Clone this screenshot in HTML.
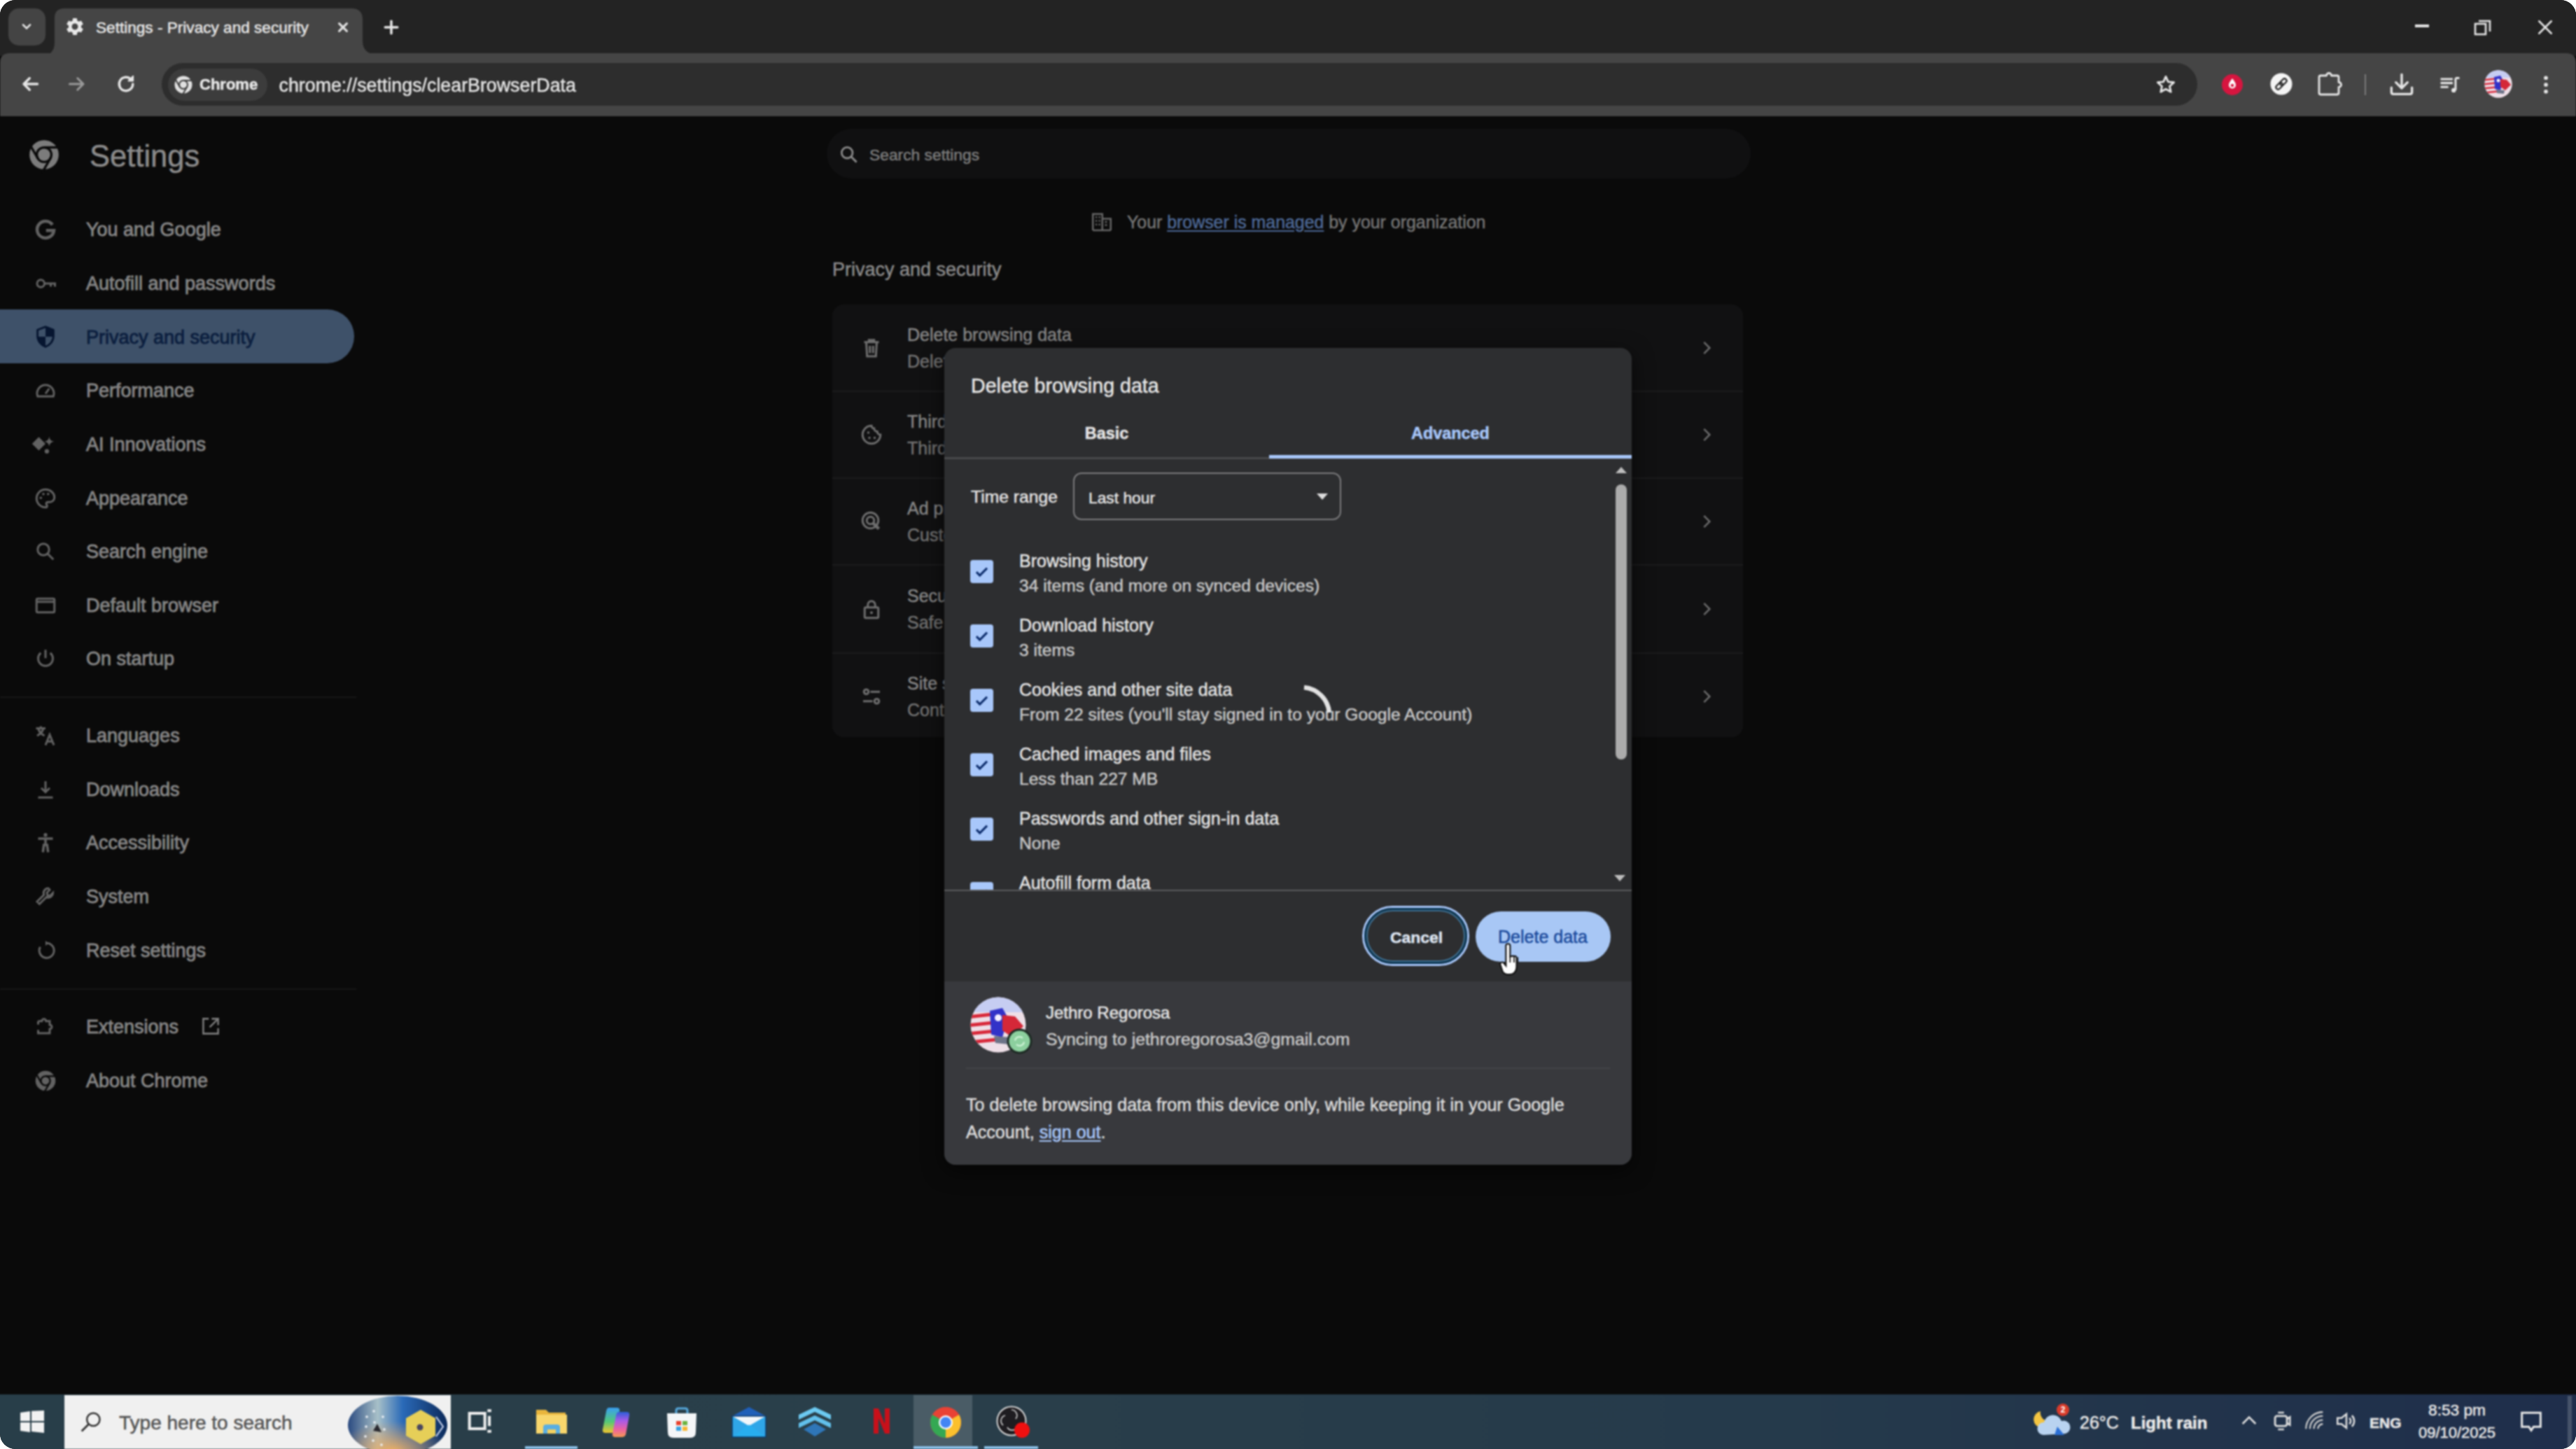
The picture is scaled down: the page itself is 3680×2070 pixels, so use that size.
<!DOCTYPE html>
<html><head><meta charset="utf-8">
<style>
*{margin:0;padding:0;box-sizing:border-box}
html,body{width:3680px;height:2070px;overflow:hidden;background:#fff;font-family:"Liberation Sans",sans-serif}
#inner{position:absolute;left:0;top:0;width:3680px;height:2070px;filter:blur(0.8px)}
#frame{position:absolute;left:0;top:0;width:3680px;height:2070px;border-radius:22px;overflow:hidden;background:#0a0a0a}
.a{position:absolute}
svg{overflow:visible}
.t{position:absolute;white-space:nowrap;line-height:1;-webkit-text-stroke:0.5px currentColor}
</style></head>
<body><div id="frame"><div id="inner">
<div class="a" style="left:-12px;top:-12px;width:3704px;height:92px;background:#232323;"></div>
<div class="a" style="left:12px;top:12px;width:53px;height:53px;background:#444444;border-radius:15px;"></div>
<svg class="a" style="left:26.0px;top:26.0px;" width="24" height="24" viewBox="0 0 24 24"><path d="M7 9.5l5 5 5-5" fill="none" stroke="#e6e6e6" stroke-width="2.6" stroke-linecap="round"/></svg>
<svg class="a" style="left:58px;top:10px;" width="490" height="70" viewBox="0 0 490 70"><path d="M0 70 Q20 70 20 50 L20 16 Q20 2 34 2 L444 2 Q460 2 460 18 L460 48 Q460 68 482 68 L482 70 Z" fill="#454545"/></svg>
<svg class="a" style="left:92.0px;top:23.0px;" width="30" height="30" viewBox="0 0 24 24"><path fill="#e8e8e8" d="M19.14 12.94c.04-.3.06-.61.06-.94 0-.32-.02-.64-.07-.94l2.03-1.58a.49.49 0 00.12-.61l-1.92-3.32a.488.488 0 00-.59-.22l-2.39.96c-.5-.38-1.03-.7-1.62-.94l-.36-2.54a.484.484 0 00-.48-.41h-3.84c-.24 0-.43.17-.47.41l-.36 2.54c-.59.24-1.13.57-1.62.94l-2.39-.96c-.22-.08-.47 0-.59.22L2.74 8.87c-.12.21-.08.47.12.61l2.03 1.58c-.05.3-.09.63-.09.94s.02.64.07.94l-2.03 1.58a.49.49 0 00-.12.61l1.92 3.32c.12.22.37.29.59.22l2.39-.96c.5.38 1.03.7 1.62.94l.36 2.54c.05.24.24.41.48.41h3.84c.24 0 .44-.17.47-.41l.36-2.54c.59-.24 1.13-.56 1.62-.94l2.39.96c.22.08.47 0 .59-.22l1.92-3.32c.12-.22.07-.47-.12-.61l-2.01-1.58zM12 15.6c-1.98 0-3.6-1.62-3.6-3.6s1.62-3.6 3.6-3.6 3.6 1.62 3.6 3.6-1.62 3.6-3.6 3.6z"/></svg>
<div class="t" style="left:137px;top:28.87px;font-size:22.6px;color:#e6e6e6;font-weight:400;">Settings - Privacy and security</div>
<svg class="a" style="left:477.0px;top:26.0px;" width="26" height="26" viewBox="0 0 24 24"><path d="M7 7l10 10M17 7L7 17" stroke="#e0e0e0" stroke-width="2.9" stroke-linecap="round"/></svg>
<svg class="a" style="left:544.0px;top:24.0px;" width="30" height="30" viewBox="0 0 24 24"><path d="M12 5v14M5 12h14" stroke="#e6e6e6" stroke-width="2.8" stroke-linecap="round"/></svg>
<div class="a" style="left:3450px;top:35px;width:20px;height:4px;background:#e6e6e6;"></div>
<svg class="a" style="left:3534px;top:27px;" width="28" height="24" viewBox="0 0 28 24"><rect x="2" y="7" width="15" height="15" fill="none" stroke="#e6e6e6" stroke-width="2.6"/><path d="M7 3h16v15" fill="none" stroke="#e6e6e6" stroke-width="2.6"/></svg>
<svg class="a" style="left:3621.0px;top:24.0px;" width="30" height="30" viewBox="0 0 24 24"><path d="M5 5l14 14M19 5L5 19" stroke="#e6e6e6" stroke-width="2" stroke-linecap="round"/></svg>
<svg class="a" style="left:0px;top:76px;" width="3680" height="90" viewBox="0 0 3680 90"><path d="M0 14 Q0 0 14 0 L3666 0 Q3680 0 3680 14 L3680 90 L0 90 Z" fill="#454545"/></svg>
<svg class="a" style="left:25.0px;top:102.0px;" width="36" height="36" viewBox="0 0 24 24"><path d="M19 12H6M11.5 6.5L6 12l5.5 5.5" fill="none" stroke="#e6e6e6" stroke-width="2.3" stroke-linecap="round" stroke-linejoin="round"/></svg>
<svg class="a" style="left:92.0px;top:102.0px;" width="36" height="36" viewBox="0 0 24 24"><path d="M5 12h13M12.5 6.5L18 12l-5.5 5.5" fill="none" stroke="#9a9a9a" stroke-width="2" stroke-linecap="round" stroke-linejoin="round"/></svg>
<svg class="a" style="left:162.0px;top:102.0px;" width="36" height="36" viewBox="0 0 24 24"><path d="M18.5 12a6.5 6.5 0 1 1-2-4.7" fill="none" stroke="#e6e6e6" stroke-width="2.3" stroke-linecap="round"/><path d="M18.8 4.5v4.5h-4.5z" fill="#e6e6e6" stroke="#e6e6e6" stroke-width="1.2" stroke-linejoin="round"/></svg>
<div class="a" style="left:231px;top:90px;width:2908px;height:61px;background:#2d2d2d;border-radius:31px;"></div>
<div class="a" style="left:240px;top:98px;width:142px;height:46px;background:#3c3c3c;border-radius:23px;"></div>
<svg class="a" style="left:247.0px;top:106.0px;" width="30" height="30" viewBox="0 0 24 24"><circle cx="12" cy="12" r="10" fill="#e0e0e0"/><circle cx="12" cy="12" r="5.6" fill="#3c3c3c"/><circle cx="12" cy="12" r="4" fill="#e0e0e0"/><path d="M12.00 7.20L24.00 7.20" stroke="#3c3c3c" stroke-width="1.6"/><path d="M16.16 14.40L10.16 24.79" stroke="#3c3c3c" stroke-width="1.6"/><path d="M7.84 14.40L1.84 4.01" stroke="#3c3c3c" stroke-width="1.6"/></svg>
<div class="t" style="left:285px;top:110.38px;font-size:22px;color:#e8e8e8;font-weight:700;">Chrome</div>
<div class="t" style="left:398.5px;top:109.31px;font-size:26.8px;color:#e3e3e3;font-weight:400;">chrome://settings/clearBrowserData</div>
<svg class="a" style="left:3077.0px;top:104.0px;" width="34" height="34" viewBox="0 0 24 24"><path d="M12 3.8l2.4 5.3 5.8.6-4.3 3.9 1.2 5.7L12 16.4l-5.1 2.9 1.2-5.7-4.3-3.9 5.8-.6z" fill="none" stroke="#e6e6e6" stroke-width="2" stroke-linejoin="round"/></svg>
<svg class="a" style="left:3173px;top:105px;" width="32" height="32" viewBox="0 0 32 32"><circle cx="16" cy="16" r="15" fill="#d6153f"/><path d="M16 7c3 4 5 6.5 5 9.5a5 5 0 0 1-10 0C11 13.5 13 11 16 7z" fill="#fff"/><circle cx="16" cy="17" r="2.2" fill="#d6153f"/></svg>
<svg class="a" style="left:3243px;top:104px;" width="32" height="32" viewBox="0 0 32 32"><circle cx="16" cy="16" r="15.5" fill="#f4f4f4"/><g transform="rotate(-45 16 16)"><rect x="6.5" y="13" width="11" height="6" rx="3" fill="none" stroke="#262626" stroke-width="2.2"/><rect x="14.5" y="13" width="11" height="6" rx="3" fill="none" stroke="#262626" stroke-width="2.2"/></g></svg>
<svg class="a" style="left:3308.0px;top:101.0px;" width="40" height="40" viewBox="0 0 24 24"><path d="M3 5.5Q3 4.2 4.3 4.2H9.3A2.1 2.1 0 0 1 13.5 4.2H18.5Q19.8 4.2 19.8 5.5V9.9A2.1 2.1 0 0 1 19.8 14.1V19.1Q19.8 20.4 18.5 20.4H4.3Q3 20.4 3 19.1Z" fill="none" stroke="#e6e6e6" stroke-width="1.7" stroke-linejoin="round"/></svg>
<div class="a" style="left:3378px;top:106px;width:2px;height:30px;background:#7a7a7a;"></div>
<svg class="a" style="left:3411.0px;top:101.0px;" width="40" height="40" viewBox="0 0 24 24"><path d="M12 3.2v11.5M7 10l5 5 5-5" fill="none" stroke="#e6e6e6" stroke-width="2" stroke-linecap="round" stroke-linejoin="round"/><path d="M3.2 14.5V18.5Q3.2 20 4.7 20H19.3Q20.8 20 20.8 18.5V14.5" fill="none" stroke="#e6e6e6" stroke-width="2" stroke-linecap="round"/></svg>
<svg class="a" style="left:3481.0px;top:102.0px;" width="38" height="38" viewBox="0 0 24 24"><path d="M3.5 7h11M3.5 10.5h11M3.5 14h7" stroke="#e6e6e6" stroke-width="1.9"/><path d="M17 6v11" stroke="#e6e6e6" stroke-width="1.9"/><path d="M17 6h3.5" stroke="#e6e6e6" stroke-width="1.9"/><circle cx="15.3" cy="17" r="2" fill="#e6e6e6"/></svg>
<svg class="a" style="left:3549px;top:100px;" width="40" height="40" viewBox="0 0 40 40"><g transform="scale(0.5)"><defs><clipPath id="av1"><circle cx="40" cy="40" r="39.5"/></clipPath></defs><g clip-path="url(#av1)"><rect width="80" height="80" fill="#eedfe7"/><rect width="80" height="22" fill="#c6cdf2"/><path d="M0 26L36 22V27L0 31zM0 38L38 34V39L0 43zM0 50L40 46V51L0 55zM4 62L44 58V63L4 67z" fill="#d8283a"/><path d="M28 20L46 16L54 30L46 58L30 54Z" fill="#3232c8"/><circle cx="40" cy="30" r="5" fill="#f4f0ff"/><path d="M46 26L64 28L76 42L60 58L46 48Z" fill="#d42838"/><path d="M34 56L58 58L56 68L36 66Z" fill="#6d7488"/></g></g></svg>
<svg class="a" style="left:3619.0px;top:103.0px;" width="36" height="36" viewBox="0 0 24 24"><circle cx="12" cy="5.5" r="1.9" fill="#e6e6e6"/><circle cx="12" cy="12" r="1.9" fill="#e6e6e6"/><circle cx="12" cy="18.5" r="1.9" fill="#e6e6e6"/></svg>
<div class="a" style="left:-12px;top:166px;width:3704px;height:1826px;background:#0a0a0a;"></div>
<svg class="a" style="left:38.0px;top:196.0px;" width="50" height="50" viewBox="0 0 24 24"><circle cx="12" cy="12" r="10" fill="#7c7c7c"/><circle cx="12" cy="12" r="5.800000000000001" fill="#0a0a0a"/><circle cx="12" cy="12" r="4.2" fill="#7c7c7c"/><path d="M12.00 7.00L24.00 7.00" stroke="#0a0a0a" stroke-width="1.6"/><path d="M16.33 14.50L10.33 24.89" stroke="#0a0a0a" stroke-width="1.6"/><path d="M7.67 14.50L1.67 4.11" stroke="#0a0a0a" stroke-width="1.6"/></svg>
<div class="t" style="left:128px;top:202.18px;font-size:43.5px;color:#8a8a8a;font-weight:400;">Settings</div>
<div class="a" style="left:-12px;top:442px;width:518px;height:77px;background:#3e5169;border-radius:0 38.5px 38.5px 0;"></div>
<div class="a" style="left:0px;top:995px;width:509px;height:2px;background:#161616;"></div>
<div class="a" style="left:0px;top:1412px;width:509px;height:2px;background:#161616;"></div>
<div class="t" style="left:123px;top:315.14px;font-size:27px;color:#838383;font-weight:400;-webkit-text-stroke:0.9px currentColor">You and Google</div>
<svg class="a" style="left:47.0px;top:310.0px;" width="36" height="36" viewBox="0 0 24 24"><path d="M18.6 7.4A8 8 0 1 0 20 12.8H12.5" fill="none" stroke="#626262" stroke-width="3"/></svg>
<div class="t" style="left:123px;top:391.84px;font-size:27px;color:#838383;font-weight:400;-webkit-text-stroke:0.9px currentColor">Autofill and passwords</div>
<svg class="a" style="left:47.0px;top:386.7px;" width="36" height="36" viewBox="0 0 24 24"><circle cx="7.5" cy="12" r="3.5" fill="none" stroke="#626262" stroke-width="2"/><path d="M11 12h10v3M17 12v3" fill="none" stroke="#626262" stroke-width="2"/></svg>
<div class="t" style="left:123px;top:468.54px;font-size:27px;color:#0c1f3f;font-weight:400;-webkit-text-stroke:0.9px currentColor">Privacy and security</div>
<svg class="a" style="left:47.0px;top:463.4px;" width="36" height="36" viewBox="0 0 24 24"><path d="M12 2.6L19.6 5.5V11.2C19.6 16 16.4 20 12 21.6 7.6 20 4.4 16 4.4 11.2V5.5z" fill="none" stroke="#061530" stroke-width="1.9" stroke-linejoin="round"/><path d="M12 2.6L19.6 5.5V12H12z" fill="#061530"/><path d="M4.4 12H12V21.6C7.6 20 4.4 16 4.4 12z" fill="#061530"/></svg>
<div class="t" style="left:123px;top:545.14px;font-size:27px;color:#838383;font-weight:400;-webkit-text-stroke:0.9px currentColor">Performance</div>
<svg class="a" style="left:47.0px;top:540.0px;" width="36" height="36" viewBox="0 0 24 24"><path d="M4.5 17.5a8 8 0 1 1 15 0z" fill="none" stroke="#626262" stroke-width="2"/><path d="M12 15l3.5-5" fill="none" stroke="#626262" stroke-width="2"/></svg>
<div class="t" style="left:123px;top:621.94px;font-size:27px;color:#838383;font-weight:400;-webkit-text-stroke:0.9px currentColor">AI Innovations</div>
<svg class="a" style="left:47.0px;top:616.8px;" width="36" height="36" viewBox="0 0 24 24"><path d="M5.6 3.7L12 10.1 5.6 16.5-.8 10.1z" fill="#626262" transform="translate(0 1.2)"/><path d="M15.5 4.5Q16 8.7 20.2 9.2Q16 9.7 15.5 13.9Q15 9.7 10.8 9.2Q15 8.7 15.5 4.5z" fill="#626262"/><circle cx="13.3" cy="18.5" r="2.1" fill="#626262"/></svg>
<div class="t" style="left:123px;top:698.64px;font-size:27px;color:#838383;font-weight:400;-webkit-text-stroke:0.9px currentColor">Appearance</div>
<svg class="a" style="left:47.0px;top:693.5px;" width="36" height="36" viewBox="0 0 24 24"><path d="M12 3.5a8.5 8.5 0 0 0 0 17c1 0 1.5-.7 1.5-1.4 0-.9-.8-1.2-.8-2.1 0-.8.7-1.5 1.5-1.5H16a4.5 4.5 0 0 0 4.5-4.5C20.5 7 16.7 3.5 12 3.5z" fill="none" stroke="#626262" stroke-width="2"/><circle cx="7.5" cy="11.5" r="1.2" fill="#626262"/><circle cx="10" cy="7.8" r="1.2" fill="#626262"/><circle cx="14.5" cy="7.8" r="1.2" fill="#626262"/></svg>
<div class="t" style="left:123px;top:775.14px;font-size:27px;color:#838383;font-weight:400;-webkit-text-stroke:0.9px currentColor">Search engine</div>
<svg class="a" style="left:47.0px;top:770.0px;" width="36" height="36" viewBox="0 0 24 24"><circle cx="10" cy="10" r="5.5" fill="none" stroke="#626262" stroke-width="2"/><path d="M14 14l5.5 5.5" fill="none" stroke="#626262" stroke-width="2"/></svg>
<div class="t" style="left:123px;top:851.64px;font-size:27px;color:#838383;font-weight:400;-webkit-text-stroke:0.9px currentColor">Default browser</div>
<svg class="a" style="left:47.0px;top:846.5px;" width="36" height="36" viewBox="0 0 24 24"><rect x="3.5" y="5.5" width="17" height="13" rx="1" fill="none" stroke="#626262" stroke-width="2"/><path d="M3.5 8.5h17" fill="none" stroke="#626262" stroke-width="2"/></svg>
<div class="t" style="left:123px;top:928.34px;font-size:27px;color:#838383;font-weight:400;-webkit-text-stroke:0.9px currentColor">On startup</div>
<svg class="a" style="left:47.0px;top:923.2px;" width="36" height="36" viewBox="0 0 24 24"><path d="M12 3.5v8" fill="none" stroke="#626262" stroke-width="2"/><path d="M7.5 6.5a7 7 0 1 0 9 0" fill="none" stroke="#626262" stroke-width="2"/></svg>
<div class="t" style="left:123px;top:1038.14px;font-size:27px;color:#838383;font-weight:400;-webkit-text-stroke:0.9px currentColor">Languages</div>
<svg class="a" style="left:47.0px;top:1033.0px;" width="36" height="36" viewBox="0 0 24 24"><path d="M3 5h9M7.5 3v2M5 5c.8 3 3 5.5 6 7M10 5c-.8 3-3 5.5-6 7" fill="none" stroke="#626262" stroke-width="2"/><path d="M12 21l4-10 4 10M13.5 17.5h5" fill="none" stroke="#626262" stroke-width="2"/></svg>
<div class="t" style="left:123px;top:1114.64px;font-size:27px;color:#838383;font-weight:400;-webkit-text-stroke:0.9px currentColor">Downloads</div>
<svg class="a" style="left:47.0px;top:1109.5px;" width="36" height="36" viewBox="0 0 24 24"><path d="M12 4v10M8 10.5l4 4 4-4M5 19.5h14" fill="none" stroke="#626262" stroke-width="2"/></svg>
<div class="t" style="left:123px;top:1191.34px;font-size:27px;color:#838383;font-weight:400;-webkit-text-stroke:0.9px currentColor">Accessibility</div>
<svg class="a" style="left:47.0px;top:1186.2px;" width="36" height="36" viewBox="0 0 24 24"><circle cx="12" cy="4.5" r="1.8" fill="#626262"/><path d="M5 8h14M12 8v6M9.5 21l1-7h3l1 7" fill="none" stroke="#626262" stroke-width="2.4"/></svg>
<div class="t" style="left:123px;top:1268.14px;font-size:27px;color:#838383;font-weight:400;-webkit-text-stroke:0.9px currentColor">System</div>
<svg class="a" style="left:47.0px;top:1263.0px;" width="36" height="36" viewBox="0 0 24 24"><path d="M14.5 4a4.5 4.5 0 0 0-4 6.2L4 16.7 6.3 19l6.5-6.5A4.5 4.5 0 0 0 19 8.5l-2.6 2.6-2.5-.5-.5-2.5L16 5.5c-.5-.9-.8-1.5-1.5-1.5z" fill="none" stroke="#626262" stroke-width="2"/></svg>
<div class="t" style="left:123px;top:1344.64px;font-size:27px;color:#838383;font-weight:400;-webkit-text-stroke:0.9px currentColor">Reset settings</div>
<svg class="a" style="left:47.0px;top:1339.5px;" width="36" height="36" viewBox="0 0 24 24"><path d="M7 8.5A7 7 0 1 0 12 5" fill="none" stroke="#626262" stroke-width="2"/><path d="M12 2.5v5l2.5-2.5z" fill="#626262"/></svg>
<div class="t" style="left:123px;top:1454.14px;font-size:27px;color:#838383;font-weight:400;-webkit-text-stroke:0.9px currentColor">Extensions</div>
<svg class="a" style="left:47.0px;top:1449.0px;" width="36" height="36" viewBox="0 0 24 24"><path d="M5 6.5h3.5a2 2 0 0 1 4 0H16v3.5a2 2 0 0 1 0 4V18H5v-3.2M5 6.5v3.3" fill="none" stroke="#626262" stroke-width="2"/></svg>
<div class="t" style="left:123px;top:1530.64px;font-size:27px;color:#838383;font-weight:400;-webkit-text-stroke:0.9px currentColor">About Chrome</div>
<svg class="a" style="left:47.0px;top:1525.5px;" width="36" height="36" viewBox="0 0 24 24"><circle cx="12" cy="12" r="9.5" fill="#626262"/><circle cx="12" cy="12" r="5.2" fill="#0a0a0a"/><circle cx="12" cy="12" r="3.6" fill="#626262"/><path d="M12.00 7.60L23.50 7.60" stroke="#0a0a0a" stroke-width="1.6"/><path d="M15.81 14.20L10.06 24.16" stroke="#0a0a0a" stroke-width="1.6"/><path d="M8.19 14.20L2.44 4.24" stroke="#0a0a0a" stroke-width="1.6"/></svg>
<svg class="a" style="left:284.0px;top:1449.0px;" width="34" height="34" viewBox="0 0 24 24"><path d="M10 4.5H4.5v15h15V14M13 4.5h6.5V11M19.5 4.5L11 13" fill="none" stroke="#7a7a7a" stroke-width="1.8"/></svg>
<div class="a" style="left:1181px;top:184px;width:1320px;height:71px;background:#101011;border-radius:36px;"></div>
<svg class="a" style="left:1196.0px;top:204.0px;" width="34" height="34" viewBox="0 0 24 24"><circle cx="10" cy="10" r="5.5" fill="none" stroke="#8a8a8a" stroke-width="2"/><path d="M14 14l5.5 5.5" stroke="#8a8a8a" stroke-width="2"/></svg>
<div class="t" style="left:1242px;top:209.70px;font-size:22.8px;color:#7c7c7c;font-weight:400;">Search settings</div>
<svg class="a" style="left:1556.0px;top:299.0px;" width="36" height="36" viewBox="0 0 24 24"><path d="M3.5 20V4.5h9V20M12.5 9h8v11M3.5 20h17M6 7.5h1.5M9 7.5h1.5M6 11h1.5M9 11h1.5M6 14.5h1.5M9 14.5h1.5M15 12h2M15 15h2" fill="none" stroke="#666" stroke-width="1.7"/></svg>
<div class="t" style="left:1610px;top:304.92px;font-size:24.9px;color:#747474;font-weight:400;">Your <span style="color:#4d6896;text-decoration:underline;text-underline-offset:3px">browser is managed</span> by your organization</div>
<div class="t" style="left:1189px;top:372.14px;font-size:27px;color:#8a8a8a;font-weight:400;">Privacy and security</div>
<div class="a" style="left:1189px;top:435px;width:1301px;height:618px;background:#111112;border-radius:16px;"></div>
<div class="a" style="left:1189px;top:558px;width:1301px;height:2px;background:#1c1c1d;"></div>
<div class="a" style="left:1189px;top:682px;width:1301px;height:2px;background:#1c1c1d;"></div>
<div class="a" style="left:1189px;top:806px;width:1301px;height:2px;background:#1c1c1d;"></div>
<div class="a" style="left:1189px;top:932px;width:1301px;height:2px;background:#1c1c1d;"></div>
<div class="t" style="left:1296px;top:465.84px;font-size:25px;color:#858585;font-weight:400;">Delete browsing data</div>
<div class="t" style="left:1296px;top:503.84px;font-size:25px;color:#707070;font-weight:400;">Delete history, cookies, cache, and more</div>
<svg class="a" style="left:1227.0px;top:479.0px;" width="36" height="36" viewBox="0 0 24 24"><path d="M5 6.5h14M9.5 6.5V4.5h5v2M7 6.5l.8 13.5h8.4L17 6.5M10.5 10v7M13.5 10v7" fill="none" stroke="#6e6e6e" stroke-width="2"/></svg>
<svg class="a" style="left:2423.0px;top:482.0px;" width="30" height="30" viewBox="0 0 24 24"><path d="M9 5.5l6.5 6.5L9 18.5" fill="none" stroke="#6a6a6a" stroke-width="2"/></svg>
<div class="t" style="left:1296px;top:589.84px;font-size:25px;color:#858585;font-weight:400;">Third-party cookies</div>
<div class="t" style="left:1296px;top:627.84px;font-size:25px;color:#707070;font-weight:400;">Third-party cookies are blocked in Incognito mode</div>
<svg class="a" style="left:1227.0px;top:603.0px;" width="36" height="36" viewBox="0 0 24 24"><path d="M12 3.5a8.5 8.5 0 1 0 8.5 8.5 3 3 0 0 1-3-3 3 3 0 0 1-3-3 2.5 2.5 0 0 1-2.5-2.5z" fill="none" stroke="#6e6e6e" stroke-width="2"/><circle cx="9" cy="10" r="1.1" fill="#6e6e6e"/><circle cx="10" cy="15" r="1.1" fill="#6e6e6e"/><circle cx="15" cy="15" r="1.1" fill="#6e6e6e"/></svg>
<svg class="a" style="left:2423.0px;top:606.0px;" width="30" height="30" viewBox="0 0 24 24"><path d="M9 5.5l6.5 6.5L9 18.5" fill="none" stroke="#6a6a6a" stroke-width="2"/></svg>
<div class="t" style="left:1296px;top:713.84px;font-size:25px;color:#858585;font-weight:400;">Ad privacy</div>
<div class="t" style="left:1296px;top:751.84px;font-size:25px;color:#707070;font-weight:400;">Customize the info used by sites to show you ads</div>
<svg class="a" style="left:1227.0px;top:727.0px;" width="36" height="36" viewBox="0 0 24 24"><circle cx="11" cy="11" r="7.5" fill="none" stroke="#6e6e6e" stroke-width="2"/><circle cx="11" cy="11" r="3.5" fill="none" stroke="#6e6e6e" stroke-width="2"/><path d="M13 13l6 6" stroke="#6e6e6e" stroke-width="3"/></svg>
<svg class="a" style="left:2423.0px;top:730.0px;" width="30" height="30" viewBox="0 0 24 24"><path d="M9 5.5l6.5 6.5L9 18.5" fill="none" stroke="#6a6a6a" stroke-width="2"/></svg>
<div class="t" style="left:1296px;top:838.84px;font-size:25px;color:#858585;font-weight:400;">Security</div>
<div class="t" style="left:1296px;top:876.84px;font-size:25px;color:#707070;font-weight:400;">Safe Browsing (protection from dangerous sites) and other security settings</div>
<svg class="a" style="left:1227.0px;top:852.0px;" width="36" height="36" viewBox="0 0 24 24"><rect x="5.5" y="10.5" width="13" height="10" rx="1" fill="none" stroke="#6e6e6e" stroke-width="2"/><path d="M8.5 10.5V8a3.5 3.5 0 0 1 7 0v2.5" fill="none" stroke="#6e6e6e" stroke-width="2"/><circle cx="12" cy="15.5" r="1.3" fill="#6e6e6e"/></svg>
<svg class="a" style="left:2423.0px;top:855.0px;" width="30" height="30" viewBox="0 0 24 24"><path d="M9 5.5l6.5 6.5L9 18.5" fill="none" stroke="#6a6a6a" stroke-width="2"/></svg>
<div class="t" style="left:1296px;top:963.84px;font-size:25px;color:#858585;font-weight:400;">Site settings</div>
<div class="t" style="left:1296px;top:1001.84px;font-size:25px;color:#707070;font-weight:400;">Controls what information sites can use and show</div>
<svg class="a" style="left:1227.0px;top:977.0px;" width="36" height="36" viewBox="0 0 24 24"><circle cx="7" cy="7.5" r="2.2" fill="none" stroke="#6e6e6e" stroke-width="2"/><path d="M11 7.5h9M4 16.5h9" fill="none" stroke="#6e6e6e" stroke-width="2"/><circle cx="17" cy="16.5" r="2.2" fill="none" stroke="#6e6e6e" stroke-width="2"/></svg>
<svg class="a" style="left:2423.0px;top:980.0px;" width="30" height="30" viewBox="0 0 24 24"><path d="M9 5.5l6.5 6.5L9 18.5" fill="none" stroke="#6a6a6a" stroke-width="2"/></svg>
<div class="a" style="left:1349px;top:497px;width:982px;height:1167px;background:#2d2e30;border-radius:16px;box-shadow:0 8px 30px rgba(0,0,0,.6)"></div>
<div class="a" style="left:1349px;top:1402px;width:982px;height:262px;background:#38393d;border-radius:0 0 16px 16px;"></div>
<div class="t" style="left:1387px;top:536.79px;font-size:28.6px;color:#e6e6e6;font-weight:400;">Delete browsing data</div>
<div class="t" style="left:1581px;top:608.19px;font-size:23.4px;color:#e3e3e3;font-weight:700;transform:translateX(-50%);">Basic</div>
<div class="t" style="left:2072px;top:608.19px;font-size:23.4px;color:#a8c7fa;font-weight:700;transform:translateX(-50%);">Advanced</div>
<div class="a" style="left:1349px;top:653px;width:982px;height:3px;background:#48494b;"></div>
<div class="a" style="left:1813px;top:650px;width:518px;height:5px;background:#a8c7fa;"></div>
<svg class="a" style="left:2306px;top:664px;" width="20" height="14" viewBox="0 0 20 14"><path d="M2 12L10 3l8 9z" fill="#bdbdbd"/></svg>
<div class="a" style="left:2308px;top:692px;width:16px;height:393px;background:#ababab;border-radius:8px;"></div>
<svg class="a" style="left:2304px;top:1248px;" width="20" height="14" viewBox="0 0 20 14"><path d="M2 2L10 11l8-9z" fill="#bdbdbd"/></svg>
<div class="t" style="left:1387px;top:698.09px;font-size:24.7px;color:#e3e3e3;font-weight:400;">Time range</div>
<div class="a" style="left:1533px;top:675px;width:383px;height:68px;background:transparent;border-radius:12px;border:2.5px solid #7a7a7c"></div>
<div class="t" style="left:1555px;top:699.70px;font-size:22.8px;color:#e3e3e3;font-weight:400;">Last hour</div>
<svg class="a" style="left:1879px;top:703px;" width="20" height="12" viewBox="0 0 20 12"><path d="M2 2h16l-8 9z" fill="#dcdcdc"/></svg>
<div class="a" style="left:1349px;top:656px;width:982px;height:616px;overflow:hidden">
<div class="a" style="left:37px;top:144px;width:33px;height:33px;background:#a8c7fa;border-radius:4px"></div>
<svg class="a" style="left:37px;top:144px" width="33" height="33" viewBox="0 0 24 24"><path d="M6.5 12.5l3.5 3.5 7.5-7.5" fill="none" stroke="#0a2a6a" stroke-width="2.2"/></svg>
<div class="t" style="left:107px;top:132.84px;font-size:25px;color:#e3e3e3">Browsing history</div>
<div class="t" style="left:107px;top:169.18px;font-size:24.6px;color:#c7c7c7">34 items (and more on synced devices)</div>
<div class="a" style="left:37px;top:236px;width:33px;height:33px;background:#a8c7fa;border-radius:4px"></div>
<svg class="a" style="left:37px;top:236px" width="33" height="33" viewBox="0 0 24 24"><path d="M6.5 12.5l3.5 3.5 7.5-7.5" fill="none" stroke="#0a2a6a" stroke-width="2.2"/></svg>
<div class="t" style="left:107px;top:224.84px;font-size:25px;color:#e3e3e3">Download history</div>
<div class="t" style="left:107px;top:261.18px;font-size:24.6px;color:#c7c7c7">3 items</div>
<div class="a" style="left:37px;top:328px;width:33px;height:33px;background:#a8c7fa;border-radius:4px"></div>
<svg class="a" style="left:37px;top:328px" width="33" height="33" viewBox="0 0 24 24"><path d="M6.5 12.5l3.5 3.5 7.5-7.5" fill="none" stroke="#0a2a6a" stroke-width="2.2"/></svg>
<div class="t" style="left:107px;top:316.84px;font-size:25px;color:#e3e3e3">Cookies and other site data</div>
<div class="t" style="left:107px;top:353.18px;font-size:24.6px;color:#c7c7c7">From 22 sites (you'll stay signed in to your Google Account)</div>
<div class="a" style="left:37px;top:420px;width:33px;height:33px;background:#a8c7fa;border-radius:4px"></div>
<svg class="a" style="left:37px;top:420px" width="33" height="33" viewBox="0 0 24 24"><path d="M6.5 12.5l3.5 3.5 7.5-7.5" fill="none" stroke="#0a2a6a" stroke-width="2.2"/></svg>
<div class="t" style="left:107px;top:408.84px;font-size:25px;color:#e3e3e3">Cached images and files</div>
<div class="t" style="left:107px;top:445.18px;font-size:24.6px;color:#c7c7c7">Less than 227 MB</div>
<div class="a" style="left:37px;top:512px;width:33px;height:33px;background:#a8c7fa;border-radius:4px"></div>
<svg class="a" style="left:37px;top:512px" width="33" height="33" viewBox="0 0 24 24"><path d="M6.5 12.5l3.5 3.5 7.5-7.5" fill="none" stroke="#0a2a6a" stroke-width="2.2"/></svg>
<div class="t" style="left:107px;top:500.84px;font-size:25px;color:#e3e3e3">Passwords and other sign-in data</div>
<div class="t" style="left:107px;top:537.18px;font-size:24.6px;color:#c7c7c7">None</div>
<div class="a" style="left:37px;top:604px;width:33px;height:33px;background:#a8c7fa;border-radius:4px"></div>
<svg class="a" style="left:37px;top:604px" width="33" height="33" viewBox="0 0 24 24"><path d="M6.5 12.5l3.5 3.5 7.5-7.5" fill="none" stroke="#0a2a6a" stroke-width="2.2"/></svg>
<div class="t" style="left:107px;top:592.84px;font-size:25px;color:#e3e3e3">Autofill form data</div>
</div>
<div class="a" style="left:1349px;top:1271px;width:982px;height:2px;background:#5a5a5c;"></div>
<svg class="a" style="left:1850px;top:972px;" width="56" height="56" viewBox="0 0 56 56"><path d="M13 10 A40 40 0 0 1 49 46" fill="none" stroke="#e2e2e2" stroke-width="6.5"/></svg>
<div class="a" style="left:1946px;top:1294px;width:153px;height:86px;background:transparent;border-radius:43px;border:3px solid #a8c7fa"></div>
<div class="a" style="left:1949px;top:1297px;width:147px;height:80px;background:transparent;border-radius:40px;border:3px solid #0b3550"></div>
<div class="a" style="left:1952px;top:1300px;width:141px;height:74px;background:transparent;border-radius:37px;border:2px solid #3f6e8f"></div>
<div class="t" style="left:2023.5px;top:1327.62px;font-size:22.9px;color:#dfe6f2;font-weight:700;transform:translateX(-50%);">Cancel</div>
<div class="a" style="left:2108px;top:1302px;width:193px;height:72px;background:#a8c7f5;border-radius:36px;"></div>
<div class="t" style="left:2204px;top:1325.84px;font-size:25px;color:#1b4a9c;font-weight:400;transform:translateX(-50%);">Delete data</div>
<svg class="a" style="left:2141px;top:1345px;" width="48" height="60" viewBox="0 0 44 56"><g transform="scale(1.0)"><path d="M12 3c1.7 0 2.8 1.2 2.8 2.8V20c.6-.4 1.4-.5 2.2-.2 .8-.6 2.2-.6 3 .1 .9-.5 2.2-.3 2.9.6 .3.4.5 1 .5 1.5V34c0 6-4 10-9 10h-3c-3 0-5-1.5-6.6-4L2 31.5c-.7-1.3-.3-2.9 1-3.6 1.2-.6 2.6-.3 3.4.8l2.8 3.5V5.8C9.2 4.2 10.3 3 12 3z" fill="#fff" stroke="#111" stroke-width="2"/><path d="M14.8 20v8M20 20v8M25 21v7" stroke="#111" stroke-width="1.6"/></g></svg>
<svg class="a" style="left:1386px;top:1424px;" width="80" height="80" viewBox="0 0 80 80"><defs><clipPath id="av2"><circle cx="40" cy="40" r="39.5"/></clipPath></defs><g clip-path="url(#av2)"><rect width="80" height="80" fill="#eedfe7"/><rect width="80" height="22" fill="#c6cdf2"/><path d="M0 26L36 22V27L0 31zM0 38L38 34V39L0 43zM0 50L40 46V51L0 55zM4 62L44 58V63L4 67z" fill="#d8283a"/><path d="M28 20L46 16L54 30L46 58L30 54Z" fill="#3232c8"/><circle cx="40" cy="30" r="5" fill="#f4f0ff"/><path d="M46 26L64 28L76 42L60 58L46 48Z" fill="#d42838"/><path d="M34 56L58 58L56 68L36 66Z" fill="#6d7488"/></g></svg>
<svg class="a" style="left:1438px;top:1469px;" width="37" height="37" viewBox="0 0 37 37"><circle cx="18.5" cy="18.5" r="16.5" fill="#8ccf9e" stroke="#1d2b24" stroke-width="3"/><path d="M12 17.5a6.5 6.5 0 0 1 11-3.5M25 19.5a6.5 6.5 0 0 1-11 3.5" fill="none" stroke="#cdf2d6" stroke-width="2.2"/></svg>
<div class="t" style="left:1494px;top:1434.68px;font-size:24px;color:#e6e6e6;font-weight:400;">Jethro Regorosa</div>
<div class="t" style="left:1494px;top:1473.01px;font-size:24.8px;color:#c8c8c8;font-weight:400;">Syncing to jethroregorosa3@gmail.com</div>
<div class="a" style="left:1380px;top:1525px;width:920px;height:2px;background:#434447;"></div>
<div class="t" style="left:1380px;top:1565.75px;font-size:25.1px;color:#dcdcdc;font-weight:400;">To delete browsing data from this device only, while keeping it in your Google</div>
<div class="t" style="left:1380px;top:1604.75px;font-size:25.1px;color:#dcdcdc;font-weight:400;">Account, <span style="color:#a8c7fa;text-decoration:underline;text-underline-offset:3px">sign out</span>.</div>
<div class="a" style="left:-12px;top:1992px;width:3704px;height:90px;background:linear-gradient(90deg,#283e49 0%,#2a3f4a 35%,#253a4b 70%,#1f2e4b 100%);"></div>
<svg class="a" style="left:29px;top:2015px;" width="34" height="32" viewBox="0 0 34 32"><path d="M0 3l14-2v14H0zM16 .7L34 0v15H16zM0 17h14v14L0 29zM16 17h18v15l-18-2z" fill="#f2f2f2"/></svg>
<div class="a" style="left:92px;top:1993px;width:552px;height:77px;background:#f0f0f0;"></div>
<svg class="a" style="left:110.0px;top:2012.0px;" width="40" height="40" viewBox="0 0 24 24"><circle cx="14" cy="9.5" r="5.5" fill="none" stroke="#333" stroke-width="1.5"/><path d="M10 13.5L4 19.5" stroke="#333" stroke-width="1.7"/></svg>
<div class="t" style="left:170px;top:2019.30px;font-size:28px;color:#555;font-weight:400;">Type here to search</div>
<svg class="a" style="left:497px;top:1994px;" width="142" height="76" viewBox="0 0 142 76"><defs><clipPath id="sh"><ellipse cx="71" cy="42" rx="71" ry="42"/></clipPath><linearGradient id="shg" x1="0" y1="0" x2="1" y2="0"><stop offset="0" stop-color="#2a4a80"/><stop offset=".3" stop-color="#a8c0c8"/><stop offset=".55" stop-color="#2a6ab8"/><stop offset="1" stop-color="#0c2a5a"/></linearGradient><radialGradient id="shb" cx=".45" cy="1" r=".55"><stop offset="0" stop-color="#f0b060"/><stop offset="1" stop-color="#e0a060" stop-opacity="0"/></radialGradient></defs><g clip-path="url(#sh)"><rect width="142" height="80" fill="url(#shg)"/><rect width="142" height="80" fill="url(#shb)"/><g fill="#eef2f6"><circle cx="27" cy="30" r="1.8"/><circle cx="26" cy="44" r="1.8"/><circle cx="25" cy="58" r="1.8"/><circle cx="37" cy="22" r="1.8"/><circle cx="38" cy="38" r="1.8"/><circle cx="36" cy="64" r="1.8"/><circle cx="50" cy="30" r="1.8"/><circle cx="52" cy="48" r="1.8"/><circle cx="48" cy="70" r="1.8"/></g><path d="M36 50l6-10 6 12z" fill="#2a2a30"/><path d="M104 20l21 12v25l-21 12-21-12V32z" fill="#e6cf58"/><circle cx="103" cy="45" r="4.5" fill="#4a4660"/><path d="M126 30l10 14-10 14" fill="none" stroke="#d0d8f0" stroke-width="2"/></g></svg>
<svg class="a" style="left:667.0px;top:2008.0px;" width="44" height="44" viewBox="0 0 24 24"><path d="M2 6h12v12H2zM16 4h3M16 20h3M17.5 8v8" fill="none" stroke="#eee" stroke-width="2.2"/></svg>
<svg class="a" style="left:765px;top:2011px;" width="46" height="38" viewBox="0 0 46 38"><path d="M1 3h14l4 4h24v30H1z" fill="#e9b53c"/><path d="M1 10h44v27H1z" fill="#f8d66c"/><path d="M11 37V28a4 4 0 0 1 4-4h16a4 4 0 0 1 4 4v9h-6v-6H17v6z" fill="#5aaee2"/><rect x="17" y="31" width="12" height="6" fill="#f2d060"/></svg>
<svg class="a" style="left:857px;top:2009px;" width="48" height="46" viewBox="0 0 48 46"><defs><linearGradient id="cg1" x1="0" y1="0" x2="0" y2="1"><stop offset="0" stop-color="#3a9ef2"/><stop offset=".55" stop-color="#52c878"/><stop offset="1" stop-color="#f2c52e"/></linearGradient><linearGradient id="cg2" x1="0" y1="0" x2="0" y2="1"><stop offset="0" stop-color="#2a5fd8"/><stop offset=".35" stop-color="#a85ae8"/><stop offset=".7" stop-color="#ec62a0"/><stop offset="1" stop-color="#f79a50"/></linearGradient></defs><path d="M13 2H24Q29 2 28 7L23 34Q22 38 17 38H8Q3 38 4 33L9 7Q10 2 13 2Z" fill="url(#cg1)"/><path d="M27 8H38Q43 8 42 13L37 40Q36 44 31 44H22Q17 44 18 39L23 13Q24 8 27 8Z" fill="url(#cg2)"/></svg>
<svg class="a" style="left:951px;top:2008px;" width="46" height="48" viewBox="0 0 46 48"><path d="M15 12V7q0-3 3-3h10q3 0 3 3v5" fill="none" stroke="#56a8dc" stroke-width="3"/><path d="M2 11h42l-1 27q0 8-8 8H11q-8 0-8-8z" fill="#f4f6f8"/><rect x="15" y="22" width="7" height="6" fill="#e8412c"/><rect x="24" y="22" width="7" height="6" fill="#6db33f"/><rect x="15" y="30" width="7" height="6" fill="#3aa2e0"/><rect x="24" y="30" width="7" height="6" fill="#f7b733"/></svg>
<svg class="a" style="left:1045px;top:2009px;" width="50" height="45" viewBox="0 0 50 45"><path d="M1 14L25 1l24 13z" fill="#1f5fb8"/><rect x="1" y="14" width="48" height="30" fill="#2fa6e8"/><path d="M1 14h48L25 28z" fill="#f2f6fa"/><path d="M1 44L25 26l24 18z" fill="#27b0f0" opacity=".8"/><rect x="1" y="14" width="48" height="30" fill="none" stroke="#0c3a6a" stroke-width="1.5"/></svg>
<svg class="a" style="left:1140px;top:2009px;" width="48" height="44" viewBox="0 0 48 44"><path d="M24 1l23 11v7L24 8 1 19v-7z" fill="#6ccaf2"/><path d="M24 13l23 11v7L24 20 1 31v-7z" fill="#62c0ec"/><path d="M8 33l16-9 16 9-16 10z" fill="#2f76b8"/></svg>
<svg class="a" style="left:1248px;top:2012px;" width="23" height="36" viewBox="0 0 23 36"><path d="M0 0h7l9 22V0h7v36h-7L7 14v22H0z" fill="#c8101a"/></svg>
<div class="a" style="left:1305px;top:1993px;width:84px;height:77px;background:#4a5c66;"></div>
<svg class="a" style="left:1327px;top:2008px;" width="48" height="48" viewBox="0 0 48 48"><circle cx="24" cy="24" r="22" fill="#dd4433"/><path d="M24 24L5 13A22 22 0 0 1 43 13z" fill="#e94235"/><path d="M24 24L43 13A22 22 0 0 1 24 46z" fill="#fbc02d"/><path d="M24 24L24 46A22 22 0 0 1 5 13z" fill="#34a853"/><circle cx="24" cy="24" r="10" fill="#fff"/><circle cx="24" cy="24" r="7.8" fill="#4285f4"/></svg>
<svg class="a" style="left:1423px;top:2008px;" width="48" height="48" viewBox="0 0 48 48"><circle cx="22" cy="22" r="20.5" fill="#1e1c20" stroke="#d8d8d8" stroke-width="2"/><path d="M22 6a8 8 0 0 1 6 13M10 28a8 8 0 0 1 3-14M30 31a8 8 0 0 1-14 0" fill="none" stroke="#cfcfcf" stroke-width="1.6"/><circle cx="37" cy="35" r="11" fill="#f01010"/></svg>
<div class="a" style="left:750px;top:2066px;width:75px;height:4px;background:#8cc0e8;"></div>
<div class="a" style="left:1305px;top:2066px;width:92px;height:4px;background:#8cc0e8;"></div>
<div class="a" style="left:1406px;top:2066px;width:77px;height:4px;background:#8cc0e8;"></div>
<svg class="a" style="left:2905px;top:2004px;" width="58" height="50" viewBox="0 0 58 50"><path d="M10 12a12 12 0 0 0 14 14A12 12 0 1 1 10 12z" fill="#f4c542"/><path d="M14 46a9 9 0 0 1 1-18 13 13 0 0 1 25-2 9 9 0 0 1 6 18z" fill="#b9d3f0"/><path d="M34 34l10 12H30z" fill="#2a6fd6"/><circle cx="42" cy="10" r="9" fill="#d83b2b"/><text x="42" y="14" font-size="12" fill="#fff" text-anchor="middle" font-family="Liberation Sans" font-weight="700">2</text></svg>
<div class="t" style="left:2971px;top:2019.84px;font-size:25px;color:#e6e6e6;font-weight:400;">26°C</div>
<div class="t" style="left:3044px;top:2020.68px;font-size:24px;color:#eaeaea;font-weight:700;">Light rain</div>
<svg class="a" style="left:3197.0px;top:2014.0px;" width="32" height="32" viewBox="0 0 24 24"><path d="M5 15l7-7 7 7" fill="none" stroke="#ddd" stroke-width="2"/></svg>
<svg class="a" style="left:3243.0px;top:2013.0px;" width="34" height="34" viewBox="0 0 24 24"><rect x="5" y="7" width="12" height="10" rx="2" fill="none" stroke="#ddd" stroke-width="2"/><path d="M17 10l3-2v8l-3-2M8 3.5h6M8 20.5h6" fill="none" stroke="#ddd" stroke-width="1.8"/></svg>
<svg class="a" style="left:3290.0px;top:2013.0px;" width="34" height="34" viewBox="0 0 24 24"><path d="M3 20a17 17 0 0 1 17-17M7 20a13 13 0 0 1 13-13M11 20a9 9 0 0 1 9-9M15 20a5 5 0 0 1 5-5" fill="none" stroke="#ccc" stroke-width="1.6"/></svg>
<svg class="a" style="left:3335.0px;top:2013.0px;" width="34" height="34" viewBox="0 0 24 24"><path d="M3 9h4l5-4v14l-5-4H3z" fill="none" stroke="#ddd" stroke-width="1.8"/><path d="M15 9a4 4 0 0 1 0 6M17.5 6.5a7.5 7.5 0 0 1 0 11" fill="none" stroke="#ddd" stroke-width="1.8"/></svg>
<div class="t" style="left:3385px;top:2022.22px;font-size:21px;color:#e6e6e6;font-weight:700;">ENG</div>
<div class="t" style="left:3510px;top:2002.78px;font-size:22.7px;color:#e6e6e6;font-weight:400;transform:translateX(-50%);">8:53 pm</div>
<div class="t" style="left:3510px;top:2036.38px;font-size:22px;color:#e6e6e6;font-weight:400;transform:translateX(-50%);">09/10/2025</div>
<svg class="a" style="left:3596.0px;top:2010.0px;" width="40" height="40" viewBox="0 0 24 24"><path d="M4 5h16v12h-6l-2 3-2-3H4z" fill="none" stroke="#e6e6e6" stroke-width="1.8"/></svg>
<div class="a" style="left:3668px;top:1994px;width:6px;height:76px;background:#46536a;"></div>
</div></div></body></html>
